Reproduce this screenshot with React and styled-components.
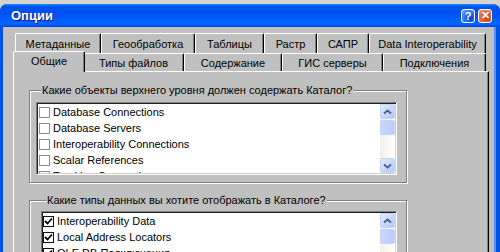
import React from 'react';
import styled, { createGlobalStyle } from 'styled-components';

const font = `'Liberation Sans', Arial, sans-serif`;
const face = '#c0c0c0';

const GlobalStyle = createGlobalStyle`
  html, body {
    margin: 0;
    padding: 0;
    background: #d6d3ce;
  }
  body {
    width: 500px;
    height: 252px;
    overflow: hidden;
  }
`;

const Screen = styled.div`
  width: 500px;
  height: 252px;
  box-sizing: border-box;
  padding-top: 4px;
  overflow: hidden;
  background: #d6d3ce;
  font-family: ${font};
  font-size: 11px;
  color: #000;
`;

const Window = styled.div`
  display: flex;
  flex-direction: column;
  height: 300px;
  background: #0054e3;
  border-radius: 7px 7px 0 0;
  overflow: hidden;
`;

const TitleBar = styled.div`
  flex: none;
  height: 23px;
  display: flex;
  align-items: center;
  gap: 3px;
  padding: 0 8px 0 11px;
  background: linear-gradient(
    180deg,
    #0997ff 0%,
    #0053ee 10%,
    #0050ee 40%,
    #0066ff 85%,
    #005bff 92%,
    #003dd7 100%
  );
`;

const Title = styled.span`
  flex: 1;
  color: #fff;
  font: bold 13px ${font};
  text-shadow: 1px 1px #0f1089;
`;

const CaptionButton = styled.div`
  width: 14px;
  height: 14px;
  box-sizing: border-box;
  border: 1px solid #fff;
  border-radius: 3px;
  display: flex;
  align-items: center;
  justify-content: center;
  color: #fff;
  font: bold 11px ${font};
  background: ${(p) =>
    p.$close
      ? 'radial-gradient(circle at 70% 70%, #cc4600, #e86a4a 60%, #f0907a)'
      : 'radial-gradient(circle at 70% 70%, #0044dd, #3a7df4 60%, #7eb0ff)'};
`;

const Frame = styled.div`
  flex: 1;
  display: flex;
  padding: 0 6px 0 3px;
  background: #0054e3;
`;

const Body = styled.div`
  flex: 1;
  display: flex;
  flex-direction: column;
  padding: 6px 5px 0 10px;
  background: ${face};
  box-shadow: 2px 0 0 #5a8ef0;
`;

const TabRow = styled.div`
  display: flex;
  padding: 0 1px 0 2px;
  height: ${(p) => p.$h}px;
  position: relative;
  z-index: ${(p) => p.$z};
`;

const Tab = styled.div`
  flex: none;
  box-sizing: border-box;
  width: ${(p) => p.$w}px;
  display: flex;
  align-items: center;
  justify-content: center;
  padding-bottom: ${(p) => p.$lift}px;
  background: ${face};
  border-top: 1px solid #fff;
  border-left: 1px solid #fff;
  border-right: 1px solid #000;
  border-radius: 2px 2px 0 0;
  box-shadow: inset -1px 0 #808080;
  white-space: nowrap;

  &[data-active='true'] {
    position: relative;
    z-index: 3;
    width: ${(p) => p.$w + 4}px;
    margin: -2px -2px -1px;
  }
`;

const Panel = styled.div`
  flex: 1;
  display: flex;
  flex-direction: column;
  padding: 12px 0 0 15px;
  border-top: 1px solid #fff;
  border-left: 1px solid #fff;
  border-right: 1px solid #000;
  box-shadow: inset -1px 0 #808080;
`;

const Group = styled.fieldset`
  width: 378px;
  box-sizing: border-box;
  margin: ${(p) => p.$top}px 0 0;
  padding: 0 9px 7px ${(p) => p.$left}px;
  border: 1px solid #808080;
  box-shadow: inset 1px 1px #fff, 1px 1px #fff;
  min-width: 0;
`;

const Legend = styled.legend`
  margin-left: 5px;
  padding: 0 1px;
  line-height: 13px;
  background: ${face};
`;

const ListBox = styled.div`
  margin-top: ${(p) => p.$gap}px;
  height: ${(p) => p.$h}px;
  display: flex;
  background: #fff;
  border: 1px solid;
  border-color: #808080 #fff #fff #808080;
  box-shadow: inset 1px 1px #202020, inset -1px -1px #d4d0c8;
  padding: 1px;
  overflow: hidden;
`;

const Items = styled.div`
  flex: 1;
  padding-left: ${(p) => p.$pad}px;
  overflow: hidden;
`;

const Item = styled.div`
  height: 16px;
  display: flex;
  align-items: center;
  gap: 3px;
  white-space: nowrap;
`;

const Check = styled.span`
  flex: none;
  width: 11px;
  height: 11px;
  box-sizing: border-box;
  border: 1px solid ${(p) => (p.$on ? '#111' : '#8c8c8c')};
  background: #fff;
  display: flex;
  align-items: center;
  justify-content: center;
`;

const ScrollBar = styled.div`
  flex: none;
  width: 15px;
  display: flex;
  flex-direction: column;
  background: linear-gradient(90deg, #f3f1ec, #fefefb);
`;

const ScrollButton = styled.div`
  height: 15px;
  flex: none;
  box-sizing: border-box;
  border: 1px solid #c3d3fd;
  border-radius: 2px;
  background: linear-gradient(135deg, #e1eafe, #b4c8f6);
  display: flex;
  align-items: center;
  justify-content: center;
`;

const Thumb = styled(ScrollButton)`
  margin-top: 1px;
  background: linear-gradient(90deg, #c9d8fc, #bccdf7);
`;

const Track = styled.div`
  flex: 1;
`;

const Chevron = ({ down }) => (
  <svg width="9" height="6" viewBox="0 0 9 6">
    <path
      d={down ? 'M1 1.5 L4.5 4.5 L8 1.5' : 'M1 4.5 L4.5 1.5 L8 4.5'}
      fill="none"
      stroke="#4d6185"
      strokeWidth="1.8"
    />
  </svg>
);

const Tick = () => (
  <svg width="9" height="9" viewBox="0 0 9 9">
    <path d="M1 4 L3.5 6.5 L8 1.5" fill="none" stroke="#000" strokeWidth="1.8" />
  </svg>
);

const topRow = [
  ['Метаданные', 86],
  ['Геообработка', 94],
  ['Таблицы', 69],
  ['Растр', 53],
  ['САПР', 52],
  ['Data Interoperability', 117],
];

const frontRow = [
  ['Общие', 68, true],
  ['Типы файлов', 101],
  ['Содержание', 98],
  ['ГИС серверы', 101],
  ['Подключения', 103],
];

const catalogItems = [
  ['Database Connections', false],
  ['Database Servers', false],
  ['Interoperability Connections', false],
  ['Scalar References', false],
  ['Tracking Connections', false],
];

const dataTypes = [
  ['Interoperability Data', true],
  ['Local Address Locators', true],
  ['OLE DB Подключения', true],
];

const CheckList = ({ items, pad, h, gap }) => (
  <ListBox $h={h} $gap={gap}>
    <Items $pad={pad}>
      {items.map(([label, on]) => (
        <Item key={label}>
          <Check $on={on}>{on && <Tick />}</Check>
          {label}
        </Item>
      ))}
    </Items>
    <ScrollBar>
      <ScrollButton>
        <Chevron />
      </ScrollButton>
      <Thumb />
      <Track />
      <ScrollButton>
        <Chevron down />
      </ScrollButton>
    </ScrollBar>
  </ListBox>
);

export default function App() {
  return (
    <Screen>
      <GlobalStyle />
      <Window>
        <TitleBar>
          <Title>Опции</Title>
          <CaptionButton>?</CaptionButton>
          <CaptionButton $close>✕</CaptionButton>
        </TitleBar>
        <Frame>
          <Body>
            <TabRow $h={20} $z={1}>
              {topRow.map(([label, w]) => (
                <Tab key={label} $w={w} $lift={0}>
                  {label}
                </Tab>
              ))}
            </TabRow>
            <TabRow $h={18} $z={2}>
              {frontRow.map(([label, w, active]) => (
                <Tab key={label} $w={w} $lift={active ? 2 : 0} data-active={!!active}>
                  {label}
                </Tab>
              ))}
            </TabRow>
            <Panel>
              <Group $top={0} $left={6}>
                <Legend>Какие объекты верхнего уровня должен содержать Каталог?</Legend>
                <CheckList items={catalogItems} pad={1} h={69} gap={5} />
              </Group>
              <Group $top={11} $left={11}>
                <Legend>Какие типы данных вы хотите отображать в Каталоге?</Legend>
                <CheckList items={dataTypes} pad={0} h={80} gap={4} />
              </Group>
            </Panel>
          </Body>
        </Frame>
      </Window>
    </Screen>
  );
}
